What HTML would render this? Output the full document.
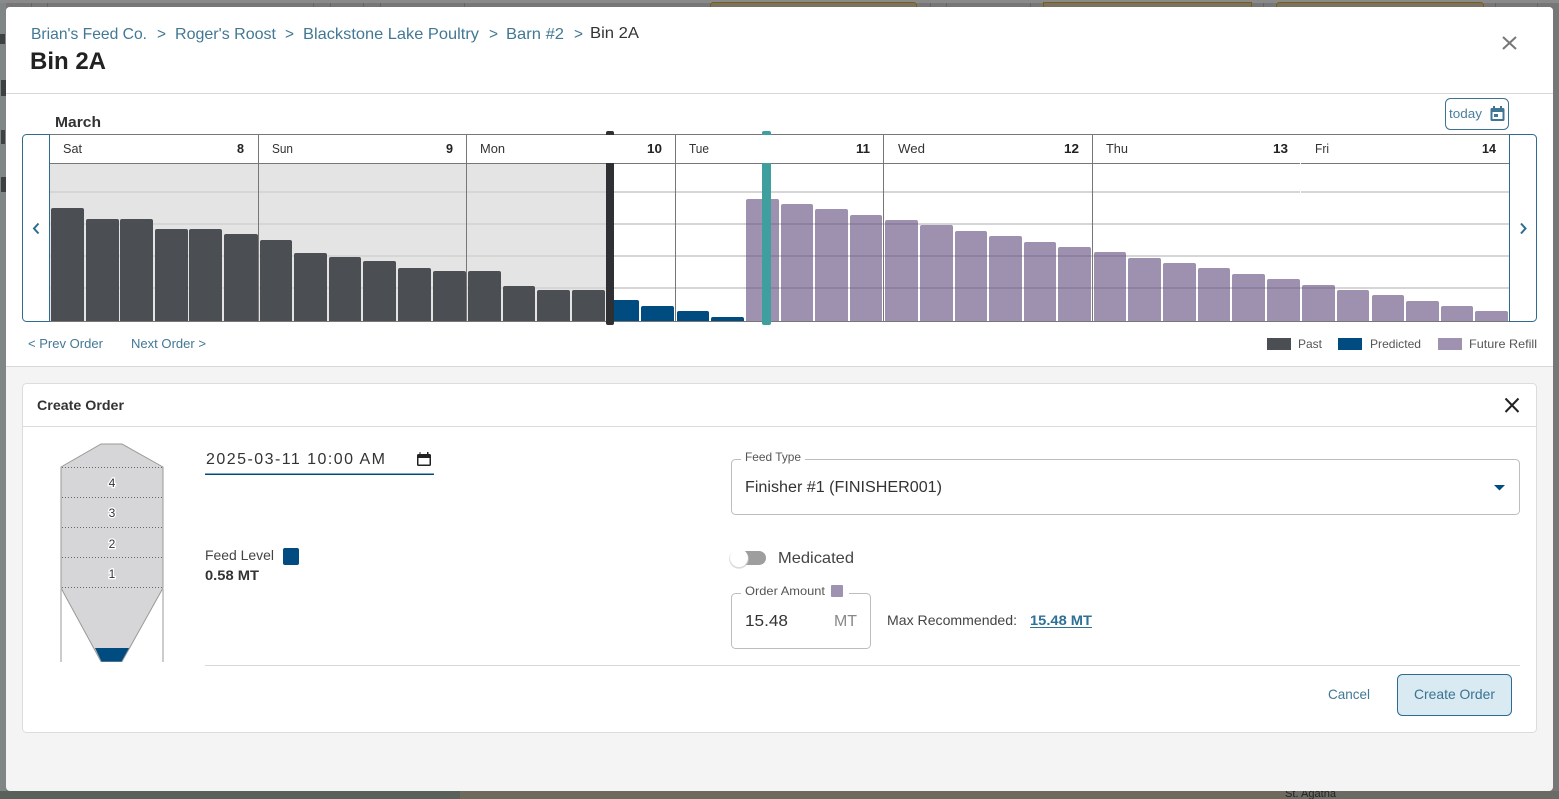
<!DOCTYPE html>
<html><head><meta charset="utf-8"><title>Bin 2A</title>
<style>
html,body{margin:0;padding:0;width:1559px;height:799px;overflow:hidden;background:#777}
svg{display:block}
text{font-family:"Liberation Sans",sans-serif}
</style></head><body>
<svg width="1559" height="799" viewBox="0 0 1559 799" xmlns="http://www.w3.org/2000/svg">
<defs><clipPath id="c"><rect x="50" y="160" width="1459" height="161"/></clipPath></defs>
<!-- backdrop -->
<rect width="1559" height="799" fill="#777"/>
<rect x="0" y="0" width="6" height="799" fill="#808585"/>
<rect x="0" y="0" width="1559" height="3" fill="#8a8a8a"/>
<g fill="#7a7265" stroke="#7a5f10"><rect x="710.500" y="2.500" width="206" height="12" rx="3"/><rect x="1043.500" y="2.500" width="208" height="12"/><rect x="1276.500" y="2.500" width="207" height="12" rx="3"/></g>
<g fill="#666"><rect x="31" y="3" width="1" height="4"/><rect x="47" y="3" width="1" height="4"/><rect x="313" y="3" width="1" height="4"/><rect x="330" y="3" width="1" height="4"/><rect x="363" y="3" width="1" height="4"/><rect x="380" y="3" width="1" height="4"/><rect x="464" y="3" width="1" height="4"/><rect x="930" y="3" width="1" height="4"/><rect x="946" y="3" width="1" height="4"/><rect x="1030" y="3" width="1" height="4"/><rect x="1263" y="3" width="1" height="4"/><rect x="1495" y="3" width="1" height="4"/><rect x="1537" y="3" width="1" height="4"/></g>
<g fill="#3d4142"><rect x="0" y="34" width="5" height="10"/><rect x="1" y="80" width="5" height="16"/><rect x="1" y="130" width="4" height="14"/><rect x="1" y="177" width="5" height="15"/></g>
<rect x="0" y="791" width="460" height="8" fill="#59625a"/>
<rect x="460" y="791" width="830" height="8" fill="#6f6a5e"/>
<rect x="1290" y="791" width="269" height="8" fill="#6b6b66"/>
<text x="1285" y="797" font-size="11" fill="#222" textLength="51" lengthAdjust="spacingAndGlyphs">St. Agatha</text>

<!-- modal -->
<rect x="6" y="7" width="1547" height="784" rx="4" fill="#f4f4f4"/>
<path d="M6 366V11a4 4 0 0 1 4-4H1549a4 4 0 0 1 4 4V366Z" fill="#fff"/>
<rect x="6" y="93" width="1547" height="1" fill="#d9d9d9"/>
<rect x="6" y="366" width="1547" height="1" fill="#d9d9d9"/>

<!-- breadcrumb -->
<g font-size="16" fill="#427894">
<text x="31" y="39" textLength="116" lengthAdjust="spacingAndGlyphs">Brian's Feed Co.</text>
<text x="157" y="39" textLength="9" lengthAdjust="spacingAndGlyphs">&gt;</text>
<text x="175" y="39" textLength="101" lengthAdjust="spacingAndGlyphs">Roger's Roost</text>
<text x="285" y="39" textLength="9" lengthAdjust="spacingAndGlyphs">&gt;</text>
<text x="303" y="39" textLength="176" lengthAdjust="spacingAndGlyphs">Blackstone Lake Poultry</text>
<text x="489" y="39" textLength="9" lengthAdjust="spacingAndGlyphs">&gt;</text>
<text x="506" y="39" textLength="58" lengthAdjust="spacingAndGlyphs">Barn #2</text>
<text x="574" y="39" textLength="9" lengthAdjust="spacingAndGlyphs">&gt;</text>
<text x="590" y="38" textLength="49" lengthAdjust="spacingAndGlyphs" fill="#333">Bin 2A</text>
</g>
<text x="30" y="69" font-size="24" font-weight="700" fill="#222" textLength="76" lengthAdjust="spacingAndGlyphs">Bin 2A</text>
<path d="M1503 37L1516 49M1516 37L1503 49" stroke="#777" stroke-width="2" fill="none"/>

<text x="55" y="127" font-size="15" font-weight="700" fill="#333" textLength="46" lengthAdjust="spacingAndGlyphs">March</text>

<!-- today -->
<rect x="1445.500" y="98.500" width="63" height="31" rx="5" fill="#fff" stroke="#3a7392"/>
<text x="1449" y="118" font-size="13" fill="#4a7f9b" textLength="33" lengthAdjust="spacingAndGlyphs">today</text>
<path d="M1493 106v2h-1a1.500 1.500 0 0 0-1.500 1.500v10a1.500 1.500 0 0 0 1.500 1.500h11a1.500 1.500 0 0 0 1.500-1.500v-10a1.500 1.500 0 0 0-1.500-1.500h-1v-2h-2v2h-5v-2ZM1492.500 112h10v7h-10Z" fill="#3f7595" fill-rule="evenodd"/>
<rect x="1494" y="114" width="4" height="3" fill="#3f7595"/>

<!-- chart -->
<rect x="22.500" y="134.500" width="1514" height="187" rx="4" fill="#fff" stroke="#2e6b8e"/>
<rect x="50" y="164" width="556" height="157" fill="#e4e4e4"/>
<g fill="#d6d6d6"><rect x="50" y="191" width="1459" height="2"/><rect x="50" y="223" width="1459" height="2"/><rect x="50" y="255" width="1459" height="2"/><rect x="50" y="287" width="1459" height="2"/></g>
<g fill="#777"><rect x="50" y="134" width="1459" height="1"/><rect x="50" y="163" width="1459" height="1"/><rect x="258" y="134" width="1" height="187"/><rect x="466" y="134" width="1" height="187"/><rect x="675" y="134" width="1" height="187"/><rect x="883" y="134" width="1" height="187"/><rect x="1092" y="134" width="1" height="187"/></g>
<rect x="1300" y="163" width="1" height="1" fill="#fff"/><rect x="1300" y="191" width="1" height="2" fill="#fff"/>
<g clip-path="url(#c)">
<g fill="#4b4e53">
<rect x="51" y="208" width="33" height="120" rx="2"/><rect x="86" y="219" width="33" height="110" rx="2"/><rect x="120" y="219" width="33" height="110" rx="2"/><rect x="155" y="229" width="33" height="100" rx="2"/><rect x="189" y="229" width="33" height="100" rx="2"/><rect x="224" y="234" width="34" height="90" rx="2"/><rect x="260" y="240" width="32" height="90" rx="2"/><rect x="294" y="253" width="33" height="80" rx="2"/><rect x="329" y="257" width="32" height="70" rx="2"/><rect x="363" y="261" width="33" height="70" rx="2"/><rect x="398" y="268" width="33" height="60" rx="2"/><rect x="433" y="271" width="33" height="60" rx="2"/><rect x="468" y="271" width="33" height="60" rx="2"/><rect x="503" y="286" width="32" height="40" rx="2"/><rect x="537" y="290" width="33" height="40" rx="2"/><rect x="572" y="290" width="33" height="40" rx="2"/>
</g>
<g fill="#004b7f">
<rect x="607" y="300" width="32" height="30" rx="2"/><rect x="641" y="306" width="33" height="30" rx="2"/><rect x="677" y="311" width="32" height="20" rx="2"/><rect x="711" y="317" width="33" height="20" rx="2"/>
</g>
<g fill="#5d497b" opacity=".6">
<rect x="746" y="199" width="33" height="130" rx="2"/><rect x="781" y="204" width="32" height="130" rx="2"/><rect x="815" y="209" width="33" height="120" rx="2"/><rect x="850" y="215" width="32" height="120" rx="2"/><rect x="885" y="220" width="33" height="110" rx="2"/><rect x="920" y="225" width="33" height="110" rx="2"/><rect x="955" y="231" width="32" height="100" rx="2"/><rect x="989" y="236" width="33" height="100" rx="2"/><rect x="1024" y="242" width="32" height="90" rx="2"/><rect x="1058" y="247" width="33" height="90" rx="2"/><rect x="1094" y="252" width="32" height="80" rx="2"/><rect x="1128" y="258" width="33" height="80" rx="2"/><rect x="1163" y="263" width="33" height="70" rx="2"/><rect x="1198" y="268" width="32" height="70" rx="2"/><rect x="1232" y="274" width="33" height="60" rx="2"/><rect x="1267" y="279" width="33" height="60" rx="2"/><rect x="1302" y="285" width="33" height="50" rx="2"/><rect x="1337" y="290" width="32" height="50" rx="2"/><rect x="1372" y="295" width="32" height="40" rx="2"/><rect x="1406" y="301" width="33" height="40" rx="2"/><rect x="1441" y="306" width="32" height="30" rx="2"/><rect x="1475" y="311" width="33" height="30" rx="2"/>
</g>
</g>
<rect x="50" y="321" width="1459" height="1" fill="#777"/>
<rect x="49" y="134" width="1" height="188" fill="#2e6b8e"/>
<rect x="1509" y="134" width="1" height="188" fill="#2e6b8e"/>
<!-- handles -->
<rect x="606" y="131" width="8" height="194" rx="2" fill="#2f3033"/>
<rect x="762" y="131" width="9" height="194" rx="2" fill="#3f9f9f"/>
<rect x="606" y="135" width="8" height="28" fill="#fff"/>
<rect x="762" y="135" width="9" height="28" fill="#fff"/>
<!-- day labels -->
<g font-size="13" fill="#333">
<text x="63" y="153" textLength="19" lengthAdjust="spacingAndGlyphs">Sat</text>
<text x="272" y="153" textLength="21" lengthAdjust="spacingAndGlyphs">Sun</text>
<text x="480" y="153" textLength="25" lengthAdjust="spacingAndGlyphs">Mon</text>
<text x="689" y="153" textLength="20" lengthAdjust="spacingAndGlyphs">Tue</text>
<text x="898" y="153" textLength="27" lengthAdjust="spacingAndGlyphs">Wed</text>
<text x="1106" y="153" textLength="22" lengthAdjust="spacingAndGlyphs">Thu</text>
<text x="1315" y="153" textLength="14" lengthAdjust="spacingAndGlyphs">Fri</text>
</g>
<g font-size="13" font-weight="700" fill="#222">
<text x="237" y="153" textLength="7" lengthAdjust="spacingAndGlyphs">8</text>
<text x="446" y="153" textLength="7" lengthAdjust="spacingAndGlyphs">9</text>
<text x="647" y="153" textLength="15" lengthAdjust="spacingAndGlyphs">10</text>
<text x="856" y="153" textLength="14" lengthAdjust="spacingAndGlyphs">11</text>
<text x="1064" y="153" textLength="15" lengthAdjust="spacingAndGlyphs">12</text>
<text x="1273" y="153" textLength="15" lengthAdjust="spacingAndGlyphs">13</text>
<text x="1482" y="153" textLength="14" lengthAdjust="spacingAndGlyphs">14</text>
</g>
<path d="M38.500 223.500L34 228.500L38.500 233.500" stroke="#2e6b8e" stroke-width="2" fill="none"/>
<path d="M1521 223.500L1525.500 228.500L1521 233.500" stroke="#2e6b8e" stroke-width="2" fill="none"/>

<!-- order nav + legend -->
<g font-size="13" fill="#427894">
<text x="28" y="348" textLength="75" lengthAdjust="spacingAndGlyphs">&lt; Prev Order</text>
<text x="131" y="348" textLength="75" lengthAdjust="spacingAndGlyphs">Next Order &gt;</text>
</g>
<rect x="1267" y="338" width="24" height="12" fill="#4b4e53"/>
<rect x="1338" y="338" width="24" height="12" fill="#004b7f"/>
<rect x="1438" y="338" width="24" height="12" fill="#9e92b0"/>
<g font-size="12" fill="#555">
<text x="1298" y="348" textLength="24" lengthAdjust="spacingAndGlyphs">Past</text>
<text x="1370" y="348" textLength="51" lengthAdjust="spacingAndGlyphs">Predicted</text>
<text x="1469" y="348" textLength="68" lengthAdjust="spacingAndGlyphs">Future Refill</text>
</g>

<!-- card -->
<rect x="22.500" y="383.500" width="1514" height="349" rx="4" fill="#fff" stroke="#dcdcdc"/>
<rect x="23" y="426" width="1513" height="1" fill="#dcdcdc"/>
<text x="37" y="410" font-size="14" font-weight="700" fill="#333" textLength="87" lengthAdjust="spacingAndGlyphs">Create Order</text>
<path d="M1505.500 398.500L1518.500 412M1518.500 398.500L1505.500 412" stroke="#222" stroke-width="2" fill="none"/>

<!-- silo -->
<path d="M61 467L101 444H122L163 467V588L122 662H101L61 588Z" fill="#d6d6d9"/>
<rect x="60" y="589" width="2" height="73" fill="#ccc"/><rect x="162" y="589" width="2" height="73" fill="#ccc"/>
<path d="M61 588V467L101 444H122L163 467V588L122 661.500H101L61 588Z" fill="none" stroke="#999" stroke-width="1"/>
<path d="M95 648H129L121.500 661.500H101.500Z" fill="#004b7f"/>
<g stroke="#666" stroke-width="1" stroke-dasharray="1 2" fill="none"><path d="M62 467.500H162M62 497.500H162M62 527.500H162M62 557.500H162M62 587.500H162"/></g>
<g font-size="12" fill="#333" text-anchor="middle" stroke="#fff" stroke-width="2.500" paint-order="stroke">
<text x="112" y="487">4</text><text x="112" y="517">3</text><text x="112" y="548">2</text><text x="112" y="578">1</text>
</g>

<!-- date -->
<text x="206" y="464" font-size="16" fill="#333" textLength="179" lengthAdjust="spacing">2025-03-11 10:00 AM</text>
<path d="M419.500 452v2h-1a1.500 1.500 0 0 0-1.500 1.500v9a1.500 1.500 0 0 0 1.500 1.500h11a1.500 1.500 0 0 0 1.500-1.500v-9a1.500 1.500 0 0 0-1.500-1.500h-1v-2h-1.500v2h-6.500v-2ZM418.500 458h11v6.500h-11Z" fill="#222" fill-rule="evenodd"/>
<rect x="205" y="473.500" width="229" height="1.500" fill="#004b7f"/>

<!-- feed level -->
<text x="205" y="560" font-size="14" fill="#444" textLength="69" lengthAdjust="spacingAndGlyphs">Feed Level</text>
<rect x="283" y="548" width="16" height="17" rx="2" fill="#004b7f"/>
<text x="205" y="580" font-size="13.500" font-weight="700" fill="#333" textLength="54" lengthAdjust="spacingAndGlyphs">0.58 MT</text>

<!-- feed type -->
<rect x="731.500" y="459.500" width="788" height="55" rx="4" fill="#fff" stroke="#bdbdbd"/>
<rect x="741" y="458" width="64" height="3" fill="#fff"/>
<text x="745" y="461" font-size="12" fill="#555" textLength="56" lengthAdjust="spacingAndGlyphs">Feed Type</text>
<text x="745" y="492" font-size="15.500" fill="#333" textLength="197" lengthAdjust="spacingAndGlyphs">Finisher #1 (FINISHER001)</text>
<path d="M1494 485H1505L1499.500 490.500Z" fill="#004b7f"/>

<!-- medicated -->
<rect x="739" y="551" width="27" height="14" rx="7" fill="#9e9e9e"/>
<circle cx="739" cy="559" r="9.800" fill="#ccc" opacity=".7"/>
<circle cx="739" cy="558" r="9" fill="#fff"/>
<text x="778" y="563" font-size="16" fill="#444" textLength="76" lengthAdjust="spacingAndGlyphs">Medicated</text>

<!-- order amount -->
<rect x="731.500" y="593.500" width="139" height="55" rx="4" fill="#fff" stroke="#bdbdbd"/>
<rect x="741" y="592" width="108" height="3" fill="#fff"/>
<text x="745" y="595" font-size="12" fill="#555" textLength="80" lengthAdjust="spacingAndGlyphs">Order Amount</text>
<rect x="831" y="585" width="12" height="12" rx="1" fill="#9e92b0"/>
<text x="745" y="626" font-size="16" fill="#333" textLength="43" lengthAdjust="spacingAndGlyphs">15.48</text>
<text x="834" y="626" font-size="16" fill="#888" textLength="23" lengthAdjust="spacingAndGlyphs">MT</text>
<text x="887" y="625" font-size="14" fill="#444" textLength="130" lengthAdjust="spacingAndGlyphs">Max Recommended:</text>
<text x="1030" y="625" font-size="14" font-weight="700" fill="#2e7096" textLength="62" lengthAdjust="spacingAndGlyphs">15.48 MT</text>
<rect x="1030" y="627" width="62" height="1" fill="#2e7096"/>

<!-- footer -->
<rect x="205" y="665" width="1315" height="1" fill="#d9d9d9"/>
<text x="1328" y="699" font-size="14" fill="#427894" textLength="42" lengthAdjust="spacingAndGlyphs">Cancel</text>
<rect x="1397.500" y="674.500" width="114" height="41" rx="5" fill="#daeaf3" stroke="#2e6b8e"/>
<text x="1414" y="699" font-size="14" fill="#3a7392" textLength="81" lengthAdjust="spacingAndGlyphs">Create Order</text>
</svg>
</body></html>
